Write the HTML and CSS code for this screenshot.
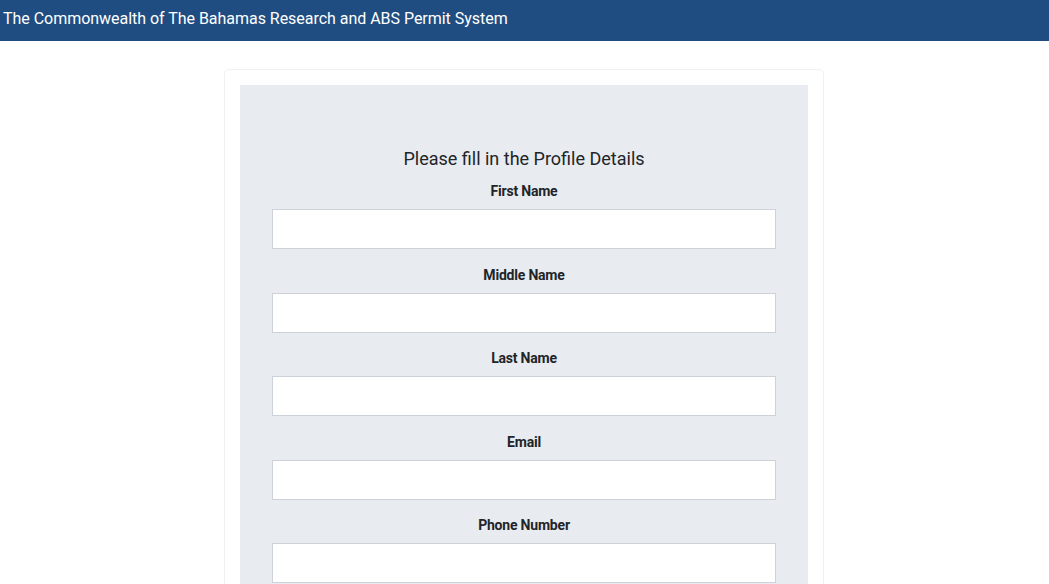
FILE: index.html
```html
<!DOCTYPE html>
<html lang="en">
<head>
<meta charset="utf-8">
<title>Profile Details</title>
<link rel="stylesheet" href="styles.css">
</head>
<body>
<header class="topbar">The Commonwealth of The Bahamas Research and ABS Permit System</header>
<main class="page">
  <section class="card">
    <form class="panel">
      <h2 class="title">Please fill in the Profile Details</h2>
      <div class="field"><label class="label">First Name</label><input class="input" type="text"></div>
      <div class="field"><label class="label">Middle Name</label><input class="input" type="text"></div>
      <div class="field"><label class="label">Last Name</label><input class="input" type="text"></div>
      <div class="field"><label class="label">Email</label><input class="input" type="email"></div>
      <div class="field"><label class="label">Phone Number</label><input class="input" type="text"></div>
    </form>
  </section>
</main>
</body>
</html>
```
FILE: styles.css
```css
* { box-sizing: border-box; }
html, body { margin: 0; padding: 0; }
body {
  font-family: Roboto, "Liberation Sans", sans-serif;
  color: #212529;
  background: #ffffff;
  overflow: hidden;
}
.topbar {
  height: 41px;
  background: #1f4d82;
  color: #ffffff;
  font-size: 16px;
  line-height: 37px;
  padding-left: 3px;
  letter-spacing: -0.03px;
}
.page {
  display: flex;
  justify-content: center;
  padding-top: 28px;
}
.card {
  width: 600px;
  margin-left: -1px;
  border: 1px solid #f1f1f3;
  border-radius: 5px;
  padding: 15px;
  background: #ffffff;
}
.panel {
  background: #e8ebf0;
  padding: 60px 32px 32px;
  display: flex;
  flex-direction: column;
}
.title {
  margin: 0 0 8px;
  font-size: 18px;
  font-weight: 400;
  line-height: 28px;
  text-align: center;
  color: #212529;
}
.field {
  display: flex;
  flex-direction: column;
  margin-bottom: 15.5px;
}
.label {
  font-size: 14px;
  font-weight: 700;
  line-height: 20px;
  text-align: center;
  margin-bottom: 8px;
  letter-spacing: -0.2px;
}
.input {
  height: 40px;
  border: 1px solid #cdd1d8;
  background: #ffffff;
  border-radius: 0;
  padding: 6px 12px;
  font-size: 14px;
  font-family: inherit;
}
```
